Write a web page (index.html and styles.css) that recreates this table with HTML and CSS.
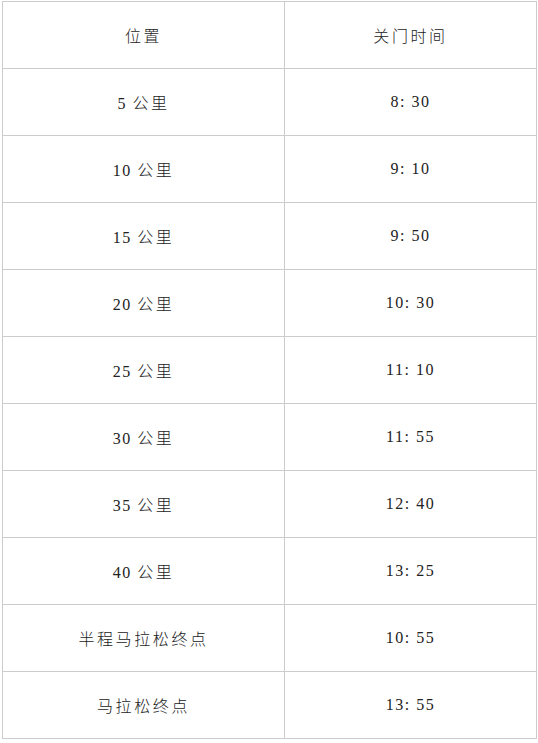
FILE: index.html
```html
<!DOCTYPE html>
<html lang="zh">
<head>
<meta charset="utf-8">
<link rel="stylesheet" href="styles.css">
</head>
<body>
<div class="wrap">
<table class="times">
<colgroup><col class="c1"><col class="c2"></colgroup>
<tbody>
<tr><td><span class="zh">位置</span></td><td><span class="zh">关门时间</span></td></tr>
<tr><td>5 <span class="zh">公里</span></td><td>8: 30</td></tr>
<tr><td>10 <span class="zh">公里</span></td><td>9: 10</td></tr>
<tr><td>15 <span class="zh">公里</span></td><td>9: 50</td></tr>
<tr><td>20 <span class="zh">公里</span></td><td>10: 30</td></tr>
<tr><td>25 <span class="zh">公里</span></td><td>11: 10</td></tr>
<tr><td>30 <span class="zh">公里</span></td><td>11: 55</td></tr>
<tr><td>35 <span class="zh">公里</span></td><td>12: 40</td></tr>
<tr><td>40 <span class="zh">公里</span></td><td>13: 25</td></tr>
<tr><td><span class="zh">半程马拉松终点</span></td><td>10: 55</td></tr>
<tr><td><span class="zh">马拉松终点</span></td><td>13: 55</td></tr>
</tbody>
</table>
</div>
</body>
</html>
```
FILE: styles.css
```css
html, body {
  margin: 0;
  padding: 0;
  background: #fff;
}
.wrap {
  padding: 1px 2px;
}
.times {
  border-collapse: collapse;
  width: 534px;
  table-layout: fixed;
}
.c1 { width: 282px; }
.c2 { width: 252px; }
.times td {
  border: 1px solid #cccccc;
  height: 66px;
  padding: 0;
  text-align: center;
  vertical-align: middle;
  font-family: "Liberation Serif", "Noto Sans CJK SC", serif;
  font-weight: 300;
  font-size: 16px;
  letter-spacing: 1.5px;
  color: #222;
}
.zh {
  letter-spacing: 2.6px;
}
```
